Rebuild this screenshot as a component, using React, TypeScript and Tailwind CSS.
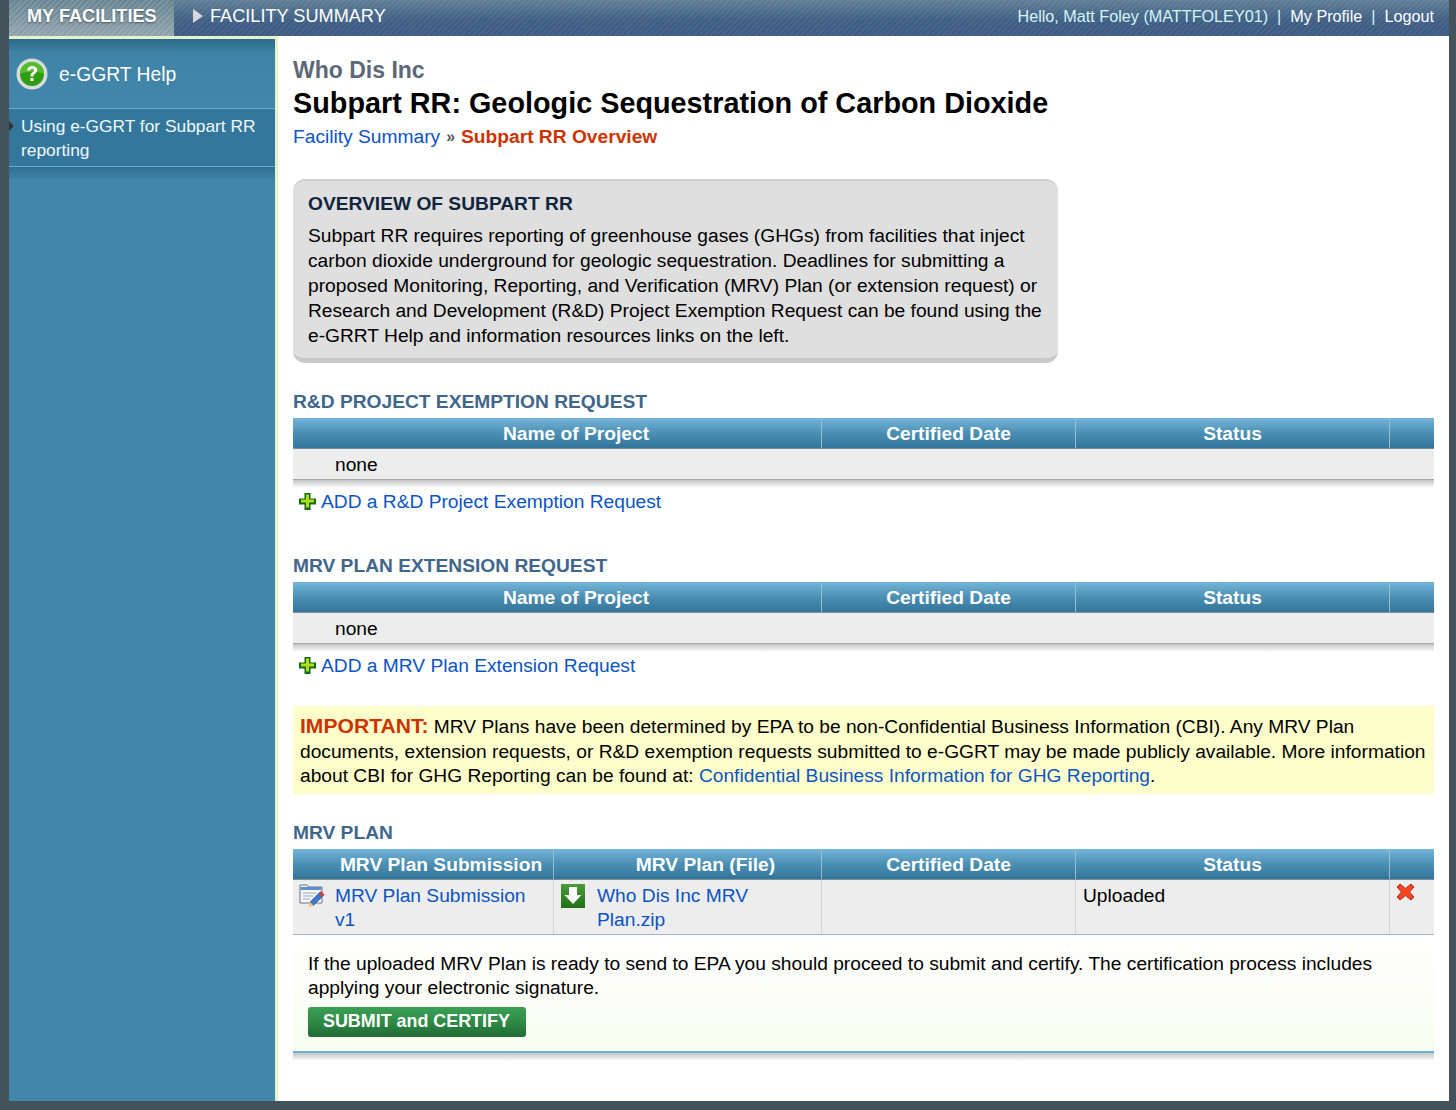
import React from 'react';

const headCell =
  'h-[30px] flex items-center justify-center text-white font-bold text-[19.2px] border-r border-[#8fc1da] last:border-r-0';
const headRow =
  'grid bg-[linear-gradient(#74b6da,#4c8fb3_50%,#33759a)] border-b border-[#7d8f9a]';
const linkCls = 'text-[#0b54c4]';

function PlusIcon() {
  return (
    <svg width="19" height="19" viewBox="0 0 19 19" className="shrink-0">
      <path d="M6.5 1h6v5.500h5.500v6h-5.500v5.500h-6v-5.500h-5.500v-6h5.500z" fill="#0f6a12" />
      <path d="M8 2.500h3v5h5v3h-5v5h-3v-5h-5v-3h5z" fill="#b5dc18" />
    </svg>
  );
}

function HelpIcon() {
  return (
    <svg width="32" height="32" viewBox="0 0 32 32">
      <circle cx="16" cy="16" r="15.500" fill="#d5dcdc" />
      <circle cx="16" cy="16" r="12" fill="#2f9d12" />
      <path d="M4 16a12 12 0 0 1 24 0c-5-3-18-3-24 0z" fill="#55bd2d" />
      <path
        d="M11 12.500c.3-3 2.500-4.500 5.200-4.500 3 0 5 1.700 5 4.100 0 3.400-3.800 3.500-3.800 6.400h-3c0-4.200 3.600-4.400 3.600-6.200 0-1-.7-1.600-1.800-1.600s-1.900.7-2.100 1.900z"
        fill="#fff"
      />
      <rect x="14.400" y="20" width="3" height="3" fill="#fff" />
    </svg>
  );
}

function EditIcon() {
  return (
    <svg width="26" height="25" viewBox="0 0 26 25">
      <path d="M1 1h7l2 2h13v16H1z" fill="#f4f7fb" stroke="#6a7480" />
      <rect x="1.500" y="3" width="21" height="3" fill="#5a8fd0" />
      <path d="M4 9h13M4 12h10M4 15h7" stroke="#9aa5b2" strokeWidth="1" />
      <path d="M11 18l10-10 3.500 3.500-10 10z" fill="#3b78c8" stroke="#23508a" strokeWidth=".6" />
      <path d="M20 9l2-2 3.500 3.500-2 2z" fill="#e23b2e" />
      <path d="M11 18l3.500 3.500-5 2z" fill="#f0c47a" />
    </svg>
  );
}

function DownloadIcon() {
  return (
    <svg width="24" height="24" viewBox="0 0 24 24">
      <defs>
        <linearGradient id="dl" x1="0" y1="0" x2="0" y2="1">
          <stop offset="0" stopColor="#4a9c38" />
          <stop offset="1" stopColor="#1f6f18" />
        </linearGradient>
      </defs>
      <rect width="24" height="24" fill="url(#dl)" />
      <path d="M8 3h8v8h4.500l-8.500 9-8.500-9h4.500z" fill="#fff" />
    </svg>
  );
}

function DeleteIcon() {
  return (
    <svg width="19" height="18" viewBox="0 0 19 18">
      <path
        d="M1 4l3-3 5.500 4.500 5.500-4.500 3 3-4.500 5 4.500 5-3 3-5.500-4.500-5.500 4.500-3-3 4.500-5z"
        fill="#f2471c"
        stroke="#b9281a"
      />
    </svg>
  );
}

function ProjectTable() {
  return (
    <div>
      <div className={`${headRow} grid-cols-[529px_254px_314px_44px]`}>
        <div className={`${headCell} pl-[38px]`}>Name of Project</div>
        <div className={headCell}>Certified Date</div>
        <div className={headCell}>Status</div>
        <div className={headCell}></div>
      </div>
      <div className="h-[31px] bg-[#ededed] border-b border-[#a8a8a8] pl-[42px] flex items-center">none</div>
      <div className="h-[8px] bg-[linear-gradient(#c4c4c4,#ffffff)]"></div>
    </div>
  );
}

function AddLink({ label }: { label: string }) {
  return (
    <div className="flex items-center gap-[4px] pl-[5px] h-[27px]">
      <PlusIcon />
      <a className={linkCls}>{label}</a>
    </div>
  );
}

const sectionTitle = 'text-[#41668c] font-bold text-[19.2px] leading-[25px]';

export default function App() {
  return (
    <div
      className="w-[1456px] h-[1110px] bg-[#44535b] pl-[9px] pr-[7px] pb-[9px] flex flex-col overflow-hidden text-[19.2px] leading-[25px] text-black"
      style={{ fontFamily: '"Liberation Sans", Arial, sans-serif' }}
    >
      {/* top bar */}
      <div className="h-[36px] shrink-0 flex items-center text-[18.15px] bg-[repeating-linear-gradient(135deg,rgba(255,255,255,0.05)_0px,rgba(255,255,255,0.05)_2px,transparent_2px,transparent_4px),linear-gradient(#5f7f96,#3f5f85_55%,#3c5c82)]">
        <div className="w-[165px] h-full flex items-center pl-[18px] pb-[3px] font-bold text-white [text-shadow:0_1px_2px_#44535b] bg-[repeating-linear-gradient(135deg,rgba(255,255,255,0.12)_0px,rgba(255,255,255,0.12)_2px,transparent_2px,transparent_4px),linear-gradient(#66838f,#8fa3ae)]">
          MY FACILITIES
        </div>
        <svg width="12" height="14" viewBox="0 0 12 14" className="ml-[18px] mb-[5px]">
          <path d="M1 0l10 7-10 7z" fill="#d8d8d8" />
        </svg>
        <span className="ml-[6px] pb-[3px] text-white">FACILITY SUMMARY</span>
        <div className="ml-auto pr-[15px] pb-[3px] text-[16.2px] text-[#d5f5f5]">
          Hello, Matt Foley (MATTFOLEY01)&nbsp; |&nbsp; <span className="text-white">My Profile</span>&nbsp; |&nbsp;{' '}
          <span className="text-white">Logout</span>
        </div>
      </div>

      <div className="flex flex-1 min-h-0">
        {/* sidebar */}
        <div className="w-[269px] shrink-0 bg-[#4286aa] border-r-[3px] border-[#e6f2c9]">
          <div className="h-[3px] bg-[#e6f2c9]"></div>
          <div className="h-[70px] flex items-center pl-[7px] gap-[11px] bg-[linear-gradient(#2c6b88_0px,#3f83a6_14px,#4286aa)] border-b border-[#66add0] text-white text-[19.3px]">
            <HelpIcon />
            <span className="pt-[1px]">e-GGRT Help</span>
          </div>
          <div className="relative h-[58px] bg-[#33779c] border-b border-[#66add0] pl-[12px] pt-[5px] pr-[6px] text-[#f2f8fa] text-[17.35px] leading-[24px]">
            <div className="absolute left-0 top-[12px] w-0 h-0 border-y-[5px] border-y-transparent border-l-[5px] border-l-[#333]"></div>
            Using e-GGRT for Subpart RR reporting
          </div>
          <div className="h-[14px] bg-[linear-gradient(#2f6f92,#4286aa)]"></div>
        </div>

        {/* content */}
        <div className="flex-1 bg-white pl-[15px] pr-[15px] min-w-0">
          <div className="pt-[21px] text-[23px] leading-[26px] font-bold text-[#5c6778]">Who Dis Inc</div>
          <div className="text-[28.8px] leading-[34px] font-bold mt-[3px]">
            Subpart RR: Geologic Sequestration of Carbon Dioxide
          </div>
          <div className="mt-[4px] flex items-center">
            <a className={linkCls}>Facility Summary</a>
            <span className="mx-[6px] text-[#555] font-bold text-[16px]">»</span>
            <span className="text-[#cc3300] font-bold">Subpart RR Overview</span>
          </div>

          <div className="mt-[30px] w-[765px] h-[184px] rounded-[12px] bg-[#dfdfdf] border-t-2 border-[#cfcfcf] border-b-[5px] border-b-[#c9c9c9] pl-[15px] pr-[14px] pt-[10px]">
            <div className="font-bold text-[#10263f] mb-[7px]">OVERVIEW OF SUBPART RR</div>
            <p>
              Subpart RR requires reporting of greenhouse gases (GHGs) from facilities that inject carbon dioxide
              underground for geologic sequestration. Deadlines for submitting a proposed Monitoring, Reporting, and
              Verification (MRV) Plan (or extension request) or Research and Development (R&amp;D) Project Exemption
              Request can be found using the e-GRRT Help and information resources links on the left.
            </p>
          </div>

          <div className={`${sectionTitle} mt-[26px] mb-[4px]`}>R&amp;D PROJECT EXEMPTION REQUEST</div>
          <ProjectTable />
          <AddLink label="ADD a R&D Project Exemption Request" />

          <div className={`${sectionTitle} mt-[38px] mb-[4px]`}>MRV PLAN EXTENSION REQUEST</div>
          <ProjectTable />
          <AddLink label="ADD a MRV Plan Extension Request" />

          <div className="mt-[27px] h-[88px] bg-[#ffffcc] px-[7px] pt-[8px] leading-[24.5px]">
            <span className="text-[#cc3300] font-bold text-[21.1px] leading-[24px]">IMPORTANT:</span> MRV Plans have
            been determined by EPA to be non-Confidential Business Information (CBI). Any MRV Plan documents, extension
            requests, or R&amp;D exemption requests submitted to e-GGRT may be made publicly available. More information
            about CBI for GHG Reporting can be found at:{' '}
            <a className={linkCls}>Confidential Business Information for GHG Reporting</a>.
          </div>

          <div className={`${sectionTitle} mt-[26px] mb-[4px]`}>MRV PLAN</div>
          <div className={`${headRow} grid-cols-[261px_268px_254px_314px_44px]`}>
            <div className={`${headCell} pl-[36px]`}>MRV Plan Submission</div>
            <div className={`${headCell} pl-[36px]`}>MRV Plan (File)</div>
            <div className={headCell}>Certified Date</div>
            <div className={headCell}>Status</div>
            <div className={headCell}></div>
          </div>
          <div className="grid grid-cols-[261px_268px_254px_314px_44px] h-[55px] bg-[#ededed] border-b border-[#a4b6c2] leading-[24px]">
            <div className="flex gap-[10px] pl-[6px] pt-[4px] border-r border-[#d4d4d4]">
              <div className="shrink-0">
                <EditIcon />
              </div>
              <a className={`${linkCls} w-[205px]`}>MRV Plan Submission v1</a>
            </div>
            <div className="flex gap-[12px] pl-[7px] pt-[4px] border-r border-[#d4d4d4]">
              <div className="shrink-0">
                <DownloadIcon />
              </div>
              <a className={`${linkCls} w-[170px]`}>Who Dis Inc MRV Plan.zip</a>
            </div>
            <div className="border-r border-[#d4d4d4]"></div>
            <div className="pl-[7px] pt-[4px] border-r border-[#d4d4d4]">Uploaded</div>
            <div className="pl-[6px] pt-[3px]">
              <DeleteIcon />
            </div>
          </div>

          <div className="h-[118px] pl-[15px] pr-[50px] pt-[17px] bg-[linear-gradient(#ffffff,#f8fcee)] border-b-2 border-[#68b0d8] leading-[24px]">
            <p>
              If the uploaded MRV Plan is ready to send to EPA you should proceed to submit and certify. The
              certification process includes applying your electronic signature.
            </p>
            <button className="mt-[7px] w-[218px] h-[30px] rounded-[3px] text-left pl-[15px] pb-[3px] text-white font-bold text-[17.9px] bg-[linear-gradient(#3aa055,#2f8a45_50%,#216a35)]">
              SUBMIT and CERTIFY
            </button>
          </div>
          <div className="h-[8px] bg-[linear-gradient(#c4c4c4,#ffffff)]"></div>
        </div>
      </div>
    </div>
  );
}
